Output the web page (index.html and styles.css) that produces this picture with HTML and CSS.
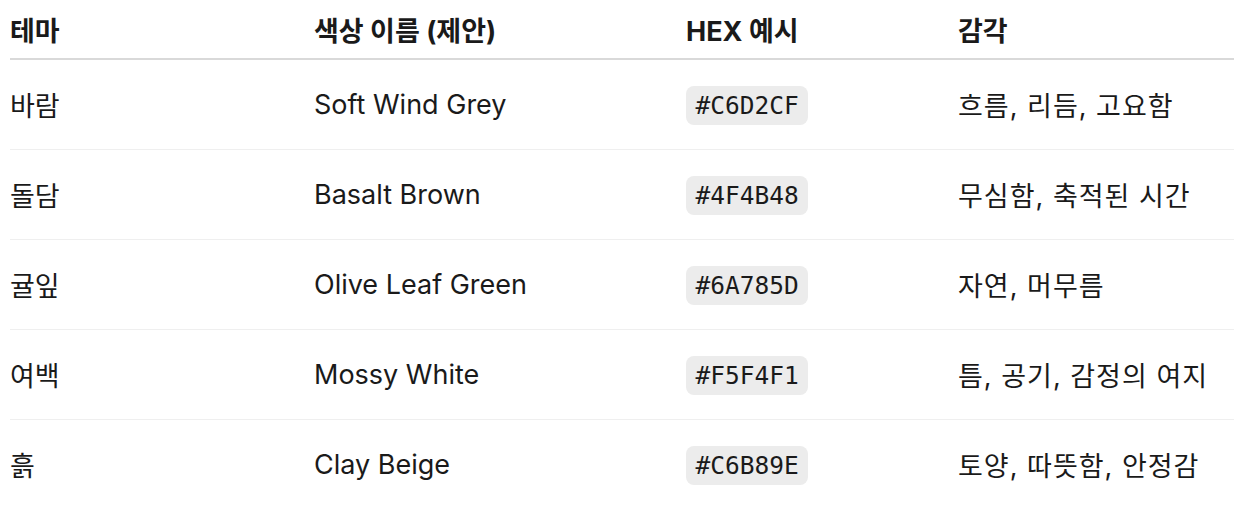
FILE: index.html
```html
<!DOCTYPE html>
<html lang="ko">
<head>
<meta charset="utf-8">
<link rel="stylesheet" href="styles.css">
</head>
<body>
<table class="palette">
  <colgroup>
    <col class="c1"><col class="c2"><col class="c3"><col class="c4">
  </colgroup>
  <thead>
    <tr><th>테마</th><th>색상 이름 (제안)</th><th>HEX 예시</th><th>감각</th></tr>
  </thead>
  <tbody>
    <tr><td>바람</td><td>Soft Wind Grey</td><td><code>#C6D2CF</code></td><td class="feel">흐름, 리듬, 고요함</td></tr>
    <tr><td>돌담</td><td>Basalt Brown</td><td><code>#4F4B48</code></td><td class="feel">무심함, 축적된 시간</td></tr>
    <tr><td>귤잎</td><td>Olive Leaf Green</td><td><code>#6A785D</code></td><td class="feel">자연, 머무름</td></tr>
    <tr><td>여백</td><td>Mossy White</td><td><code>#F5F4F1</code></td><td class="feel">틈, 공기, 감정의 여지</td></tr>
    <tr><td>흙</td><td>Clay Beige</td><td><code>#C6B89E</code></td><td class="feel">토양, 따뜻함, 안정감</td></tr>
  </tbody>
</table>
</body>
</html>
```
FILE: styles.css
```css
html, body {
  margin: 0;
  padding: 0;
  background: #ffffff;
}
body {
  padding-left: 10px;
  font-family: Inter, "Noto Sans CJK KR", sans-serif;
  font-size: 27px;
  color: #1a1a1a;
}
.palette {
  border-collapse: collapse;
  width: 1224px;
  table-layout: fixed;
}
.c1 { width: 304px; }
.c2 { width: 372px; }
.c3 { width: 272px; }
.c4 { width: 276px; }
.palette th {
  text-align: left;
  font-weight: 700;
  height: 58px;
  padding: 0;
  vertical-align: middle;
  border-bottom: 2px solid #d9d9d9;
}
.palette td {
  height: 89px;
  padding: 0;
  vertical-align: middle;
  border-bottom: 1px solid #efefef;
}
.palette td.feel {
  letter-spacing: 1px;
}
.palette tbody tr:last-child td {
  border-bottom: none;
}
.palette code {
  font-family: "DejaVu Sans Mono", monospace;
  font-size: 24.5px;
  letter-spacing: 0;
  background: #ececec;
  border-radius: 8px;
  padding: 5px 9.5px;
}
```
